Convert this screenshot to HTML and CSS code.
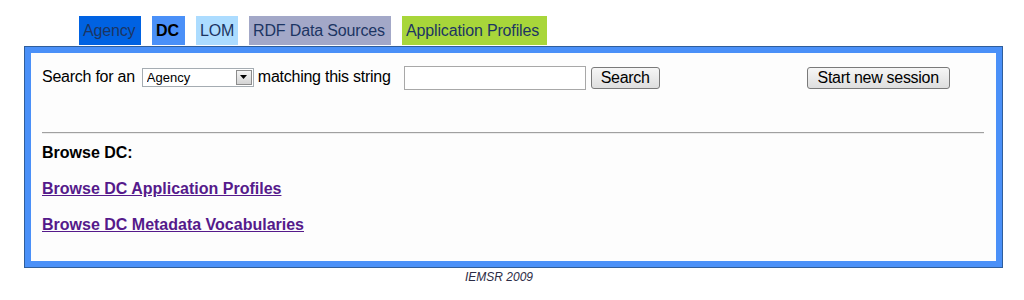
FILE: index.html
```html
<!DOCTYPE html>
<html lang="en">
<head>
    <meta charset="UTF-8">
    <title>IEMSR - Browse DC</title>
    <link rel="stylesheet" href="styles.css">
</head>
<body>
    <div class="page">
        <ul class="tabs">
            <li class="agency">Agency</li>
            <li class="dc current">DC</li>
            <li class="lom">LOM</li>
            <li class="rdf">RDF Data Sources</li>
            <li class="ap">Application Profiles</li>
        </ul>
        <div class="panel">
            <form class="search">
                <span class="label">Search for an</span>
                <span class="selectbox">
                    <select>
                        <option>Agency</option>
                    </select>
                    <span class="arrow">
                        <svg width="9" height="5" viewBox="0 0 9 5"><path d="M1 0h7L4.5 4z" fill="#000"/></svg>
                    </span>
                </span>
                <span class="label">matching this string</span>
                <input type="text" class="query">
                <button type="button" class="btn">Search</button>
                <button type="button" class="btn session">Start new session</button>
            </form>
            <hr>
            <p class="heading">Browse DC:</p>
            <p><a href="#">Browse DC Application Profiles</a></p>
            <p><a href="#">Browse DC Metadata Vocabularies</a></p>
        </div>
        <div class="footer">IEMSR 2009</div>
    </div>
</body>
</html>
```

FILE: styles.css
```css
*{
    padding: 0;
    margin: 0;
    box-sizing: border-box;
}
body{
    background: #fff;
    font-family: "Liberation Sans", Arial, sans-serif;
    font-size: 16px;
    color: #000;
}
.page{
    padding: 16px 21px 0 24px;
}
.tabs{
    display: flex;
    gap: 11px;
    list-style: none;
    margin-left: 55px;
}
.tabs li{
    height: 30px;
    line-height: 29px;
    padding: 0 4px;
    color: #1c3563;
    border-bottom: 1px solid #fff;
    letter-spacing: -0.15px;
    white-space: nowrap;
}
.tabs .agency{
    background: #0062e2;
    width: 62px;
}
.tabs .dc{
    background: #4a90f8;
    font-weight: bold;
    color: #000;
    width: 33px;
    letter-spacing: 0;
}
.tabs .lom{
    background: #acdcff;
    width: 42px;
}
.tabs .rdf{
    background: #a3a8c8;
    width: 142px;
}
.tabs .ap{
    background: #a8d63a;
    width: 145px;
}
.panel{
    border: 1px solid #2f5e9c;
    box-shadow: inset 0 0 0 6px #4a90f8;
    background: #fdfdfd;
    padding: 19px 18px 27px 17px;
    height: 222px;
}
.search{
    display: flex;
    align-items: center;
    height: 23px;
}
.label{
    margin-top: -2px;
    letter-spacing: -0.25px;
    white-space: nowrap;
}
.selectbox{
    position: relative;
    margin: 0 4px 0 7px;
}
.selectbox select{
    appearance: none;
    -webkit-appearance: none;
    display: block;
    width: 112px;
    height: 19px;
    border: 1px solid #a5acb2;
    background: #fff;
    font-family: "Liberation Sans", Arial, sans-serif;
    font-size: 13px;
    padding: 0 0 0 4px;
    border-radius: 0;
    color: #000;
}
.selectbox .arrow{
    position: absolute;
    top: 2px;
    right: 2px;
    width: 16px;
    height: 15px;
    border: 1px solid #8c8c8c;
    background: linear-gradient(#f4f4f4, #d4d4d4);
    display: flex;
    align-items: center;
    justify-content: center;
}
.query{
    width: 182px;
    height: 24px;
    border: 1px solid #a8a8a8;
    background: #fff;
    margin-left: 13px;
}
.btn{
    height: 22px;
    padding: 0 8px;
    border: 1px solid #7a7a7a;
    border-radius: 3px;
    background: linear-gradient(#f6f6f6, #dedede);
    font-family: "Liberation Sans", Arial, sans-serif;
    font-size: 16px;
    color: #000;
    margin-left: 5px;
    width: 69px;
    white-space: nowrap;
    letter-spacing: -0.3px;
}
.btn.session{
    width: 143px;
    margin-left: 147px;
    padding: 0 4px;
}
hr{
    margin: 43px 0 0 0;
    border: 0;
    border-top: 1px solid #a0a0a0;
    border-bottom: 1px solid #ececec;
}
.panel p{
    line-height: 18px;
    margin-top: 18px;
    font-weight: bold;
}
.panel p.heading{
    margin-top: 10px;
}
.panel a{
    color: #551a8b;
}
.footer{
    font-style: italic;
    font-size: 12px;
    color: #2b2b45;
    padding: 2px 0 0 441px;
}
```
